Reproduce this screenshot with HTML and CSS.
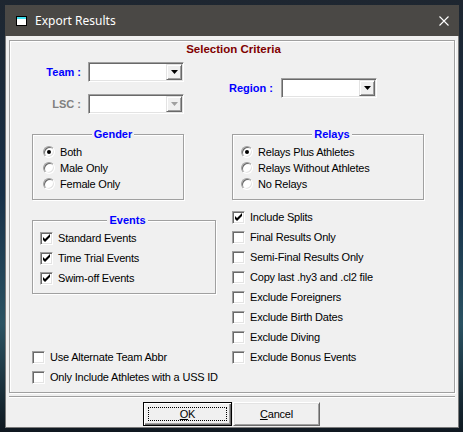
FILE: index.html
```html
<!DOCTYPE html>
<html lang="en">
<head>
    <meta charset="UTF-8">
    <title>Export Results</title>
    <link rel="stylesheet" href="styles.css">
</head>
<body>

    <div class="window">
        <div class="titlebar">
            <svg class="app-icon" width="11" height="10" viewBox="0 0 11 10">
                <rect x="0.5" y="0.5" width="10" height="9" fill="#fff" stroke="#000"/>
                <rect x="1" y="1" width="9" height="2" fill="#3fe0f0"/>
            </svg>
            <span class="title">Export Results</span>
            <svg class="close" width="10" height="10" viewBox="0 0 10 10">
                <path d="M0.5 0.5 L9.5 9.5 M9.5 0.5 L0.5 9.5" stroke="#fff" stroke-width="1.1"/>
            </svg>
        </div>

        <div class="client">
            <div class="panel">
                <div class="heading">Selection Criteria</div>

                <div class="criteria">
                    <div class="criteria-left">
                        <div class="field">
                            <span class="field-label">Team :</span>
                            <div class="combo">
                                <span class="combo-btn"><svg width="7" height="4" viewBox="0 0 7 4"><polygon points="0,0 7,0 3.5,4" fill="#000"/></svg></span>
                            </div>
                        </div>
                        <div class="field disabled">
                            <span class="field-label">LSC :</span>
                            <div class="combo">
                                <span class="combo-btn"><svg width="7" height="4" viewBox="0 0 7 4"><polygon points="0,0 7,0 3.5,4" fill="#a0a0a0"/></svg></span>
                            </div>
                        </div>
                    </div>
                    <div class="field region">
                        <span class="field-label">Region :</span>
                        <div class="combo">
                            <span class="combo-btn"><svg width="7" height="4" viewBox="0 0 7 4"><polygon points="0,0 7,0 3.5,4" fill="#000"/></svg></span>
                        </div>
                    </div>
                </div>

                <div class="columns">
                    <div class="col-left">
                        <fieldset class="group gender">
                            <legend>Gender</legend>
                            <div class="radio-row"><span class="radio on"></span>Both</div>
                            <div class="radio-row"><span class="radio"></span>Male Only</div>
                            <div class="radio-row"><span class="radio"></span>Female Only</div>
                        </fieldset>

                        <fieldset class="group events">
                            <legend>Events</legend>
                            <div class="check-row"><span class="check on"></span>Standard Events</div>
                            <div class="check-row"><span class="check on"></span>Time Trial Events</div>
                            <div class="check-row"><span class="check on"></span>Swim-off Events</div>
                        </fieldset>

                        <div class="extra">
                            <div class="check-row"><span class="check"></span>Use Alternate Team Abbr</div>
                            <div class="check-row"><span class="check"></span>Only Include Athletes with a USS ID</div>
                        </div>
                    </div>

                    <div class="col-right">
                        <fieldset class="group relays">
                            <legend>Relays</legend>
                            <div class="radio-row"><span class="radio on"></span>Relays Plus Athletes</div>
                            <div class="radio-row"><span class="radio"></span>Relays Without Athletes</div>
                            <div class="radio-row"><span class="radio"></span>No Relays</div>
                        </fieldset>

                        <div class="options">
                            <div class="check-row"><span class="check on"></span>Include Splits</div>
                            <div class="check-row"><span class="check"></span>Final Results Only</div>
                            <div class="check-row"><span class="check"></span>Semi-Final Results Only</div>
                            <div class="check-row"><span class="check"></span>Copy last .hy3 and .cl2 file</div>
                            <div class="check-row"><span class="check"></span>Exclude Foreigners</div>
                            <div class="check-row"><span class="check"></span>Exclude Birth Dates</div>
                            <div class="check-row"><span class="check"></span>Exclude Diving</div>
                            <div class="check-row"><span class="check"></span>Exclude Bonus Events</div>
                        </div>
                    </div>
                </div>
            </div>

            <div class="footer">
                <button class="btn default"><u>O</u>K</button>
                <button class="btn"><u>C</u>ancel</button>
            </div>
        </div>
    </div>

</body>
</html>
```

FILE: styles.css
```css
body {
    margin: 0;
    width: 463px;
    height: 432px;
    overflow: hidden;
    background: linear-gradient(#1e2630, #173048 45%, #2a5262 75%, #0f1820);
    font-family: "Liberation Sans", Arial, sans-serif;
    font-size: 11px;
    letter-spacing: -0.2px;
    color: #000;
}
.window {
    margin: 5px 0 0 5px;
    width: 454px;
    height: 423px;
    display: flex;
    flex-direction: column;
}
.titlebar {
    flex: none;
    height: 31px;
    background-color: #4a4845;
    display: flex;
    align-items: center;
    padding: 0 10px 0 11px;
    color: #fff;
    font-family: "Noto Sans", sans-serif;
    font-size: 12px;
    letter-spacing: 0;
}
.app-icon {
    margin-right: 8px;
}
.close {
    margin-left: auto;
}
.client {
    flex: 1;
    background-color: #f0f0f0;
    border: 1px solid #7a7a7a;
    border-top: none;
    padding: 4px 3px 0 3px;
}
.panel {
    box-sizing: border-box;
    height: 353px;
    border: 1px solid #a0a0a0;
    box-shadow: inset 1px 1px 0 #fff, 1px 1px 0 #fff;
    padding-top: 1px;
}
.heading {
    text-align: center;
    padding-left: 3px;
    font-weight: bold;
    font-size: 11.5px;
    line-height: 14px;
    letter-spacing: 0;
    color: #800000;
}
.criteria {
    display: flex;
    align-items: center;
    margin-top: 6px;
    padding-left: 22px;
}
.criteria-left {
    display: flex;
    flex-direction: column;
    gap: 12px;
}
.field {
    display: flex;
    align-items: center;
    gap: 7px;
}
.field-label {
    width: 49px;
    text-align: right;
    font-weight: bold;
    letter-spacing: 0;
    color: #0000ff;
}
.field.disabled .field-label {
    color: #808080;
}
.region {
    margin-left: 45px;
    gap: 8px;
}
.region .field-label {
    width: auto;
}
.combo {
    box-sizing: border-box;
    width: 96px;
    height: 20px;
    padding: 1px;
    background-color: #fff;
    border: 1px solid;
    border-color: #a0a0a0 #fff #fff #a0a0a0;
    box-shadow: inset 1px 1px 0 #696969, inset -1px -1px 0 #e3e3e3;
    display: flex;
    justify-content: flex-end;
}
.combo-btn {
    box-sizing: border-box;
    width: 16px;
    height: 16px;
    background-color: #f0f0f0;
    border: 1px solid;
    border-color: #e3e3e3 #696969 #696969 #e3e3e3;
    box-shadow: inset 1px 1px 0 #fff, inset -1px -1px 0 #a0a0a0;
    display: flex;
    align-items: center;
    justify-content: center;
}
.combo-btn svg {
    display: block;
}
.columns {
    display: flex;
    gap: 16px;
    margin-top: 14px;
    padding-left: 22px;
}
.col-left {
    width: 184px;
}
.col-right {
    width: 192px;
}
.group {
    box-sizing: border-box;
    min-width: 0;
    margin: 0;
    padding: 3px 0 7px 10px;
    border: 1px solid #a0a0a0;
    box-shadow: inset 1px 1px 0 #fff, 1px 1px 0 #fff;
}
.group legend {
    margin: 0 auto;
    padding: 0 2px;
    background-color: #f0f0f0;
    font-weight: bold;
    line-height: 13px;
    letter-spacing: 0;
    color: #0000ff;
}
.gender {
    width: 152px;
}
.relays {
    width: 192px;
    padding-left: 8px;
}
.events {
    width: 184px;
    margin-top: 14px;
    padding: 1px 0 5px 7px;
}
.radio-row {
    display: flex;
    align-items: center;
    gap: 5px;
    height: 16px;
}
.radio {
    box-sizing: border-box;
    flex: none;
    width: 12px;
    height: 12px;
    border-radius: 50%;
    background-color: #fff;
    border: 1px solid;
    border-color: #a0a0a0 #fff #fff #a0a0a0;
    box-shadow: inset 1px 1px 0 #696969, inset -1px -1px 0 #e3e3e3;
    display: flex;
    align-items: center;
    justify-content: center;
}
.radio.on::after {
    content: "";
    width: 4px;
    height: 4px;
    border-radius: 50%;
    background-color: #000;
}
.check-row {
    display: flex;
    align-items: center;
    gap: 5px;
    height: 20px;
    white-space: nowrap;
}
.check {
    box-sizing: border-box;
    flex: none;
    width: 13px;
    height: 13px;
    background-color: #fff;
    border: 1px solid;
    border-color: #a0a0a0 #fff #fff #a0a0a0;
    box-shadow: inset 1px 1px 0 #696969, inset -1px -1px 0 #e3e3e3;
}
.check.on {
    background: #fff url("data:image/svg+xml,%3Csvg xmlns='http://www.w3.org/2000/svg' width='11' height='11'%3E%3Cpolygon points='2,4 4,6 9,1 9,4 4,9 2,7' fill='%23000'/%3E%3C/svg%3E") no-repeat 0 0;
}
.extra {
    margin-top: 53px;
}
.options {
    margin-top: 7px;
}
.footer {
    box-sizing: border-box;
    width: 446px;
    margin-top: 3px;
    padding: 5px 0 0 134px;
    border-top: 1px solid #a0a0a0;
    box-shadow: inset 0 1px 0 #fff;
    display: flex;
    gap: 1px;
}
.btn {
    box-sizing: border-box;
    width: 87px;
    height: 24px;
    padding: 0;
    font: inherit;
    letter-spacing: inherit;
    color: #000;
    background-color: #f0f0f0;
    border: 1px solid;
    border-color: #fff #696969 #696969 #fff;
    box-shadow: inset 1px 1px 0 #e3e3e3, inset -1px -1px 0 #a0a0a0;
}
.btn.default {
    width: 89px;
    border-color: #000;
    box-shadow: inset 1px 1px 0 #fff, inset -1px -1px 0 #696969, inset -2px -2px 0 #a0a0a0;
    outline: 1px dotted #000;
    outline-offset: -6px;
}
```
